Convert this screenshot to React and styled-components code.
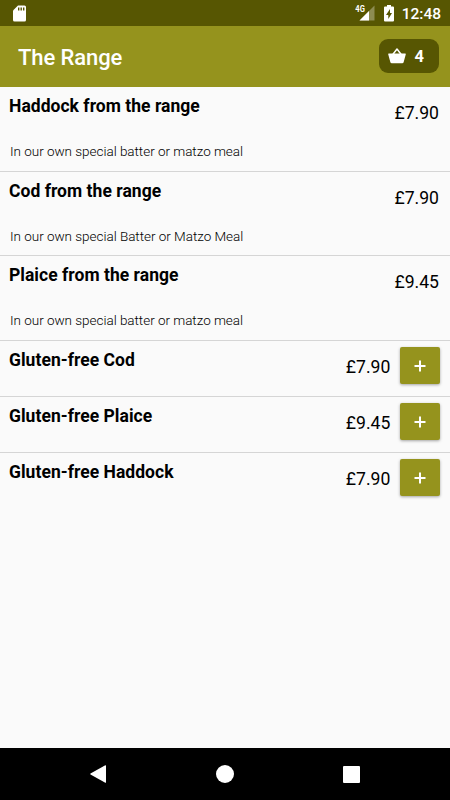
import React from "react";
import styled, { createGlobalStyle } from "styled-components";

const GlobalStyle = createGlobalStyle`
  * { box-sizing: border-box; }
  body { margin: 0; background: #fafafa; font-family: Roboto, "Liberation Sans", sans-serif; color: #000; }
`;

const Screen = styled.div`
  width: 450px;
  height: 800px;
  display: flex;
  flex-direction: column;
  background: #fafafa;
  overflow: hidden;
`;

const StatusBar = styled.header`
  flex: none;
  height: 26px;
  display: flex;
  align-items: center;
  justify-content: space-between;
  padding: 0 9px 0 13px;
  background: #575602;
  color: #fff;
  svg { display: block; }
`;

const StatusIcons = styled.div`
  display: flex;
  align-items: center;
  gap: 8px;
`;

const Clock = styled.time`
  font-size: 15.5px;
  font-weight: 500;
  line-height: 26px;
  padding-top: 2px;
`;

const AppBar = styled.div`
  flex: none;
  height: 61px;
  display: flex;
  align-items: center;
  justify-content: space-between;
  padding: 0 11px 0 18px;
  background: #95931d;
  color: #fff;
`;

const Title = styled.h1`
  margin: 3px 0 0;
  font-size: 22px;
  font-weight: 500;
  line-height: 28px;
  letter-spacing: -0.1px;
`;

const BasketButton = styled.button`
  width: 60px;
  height: 34px;
  margin-top: -1px;
  display: flex;
  align-items: center;
  gap: 9px;
  padding: 0 0 0 8.5px;
  border: 0;
  border-radius: 9px;
  background: #575602;
  color: #fff;
  font: 700 16.5px/34px Roboto, sans-serif;
  svg { display: block; }
  span { padding-top: 2px; }
`;

const Menu = styled.main`
  flex: 1;
`;

const Row = styled.article`
  height: ${(p) => p.$height}px;
  display: flex;
  justify-content: space-between;
  padding: 0 9px;
  border-bottom: 1px solid ${(p) => (p.$last ? "transparent" : "#d5d5d5")};
`;

const Details = styled.div`
  display: flex;
  flex-direction: column;
  padding-top: 8px;
`;

const Name = styled.h2`
  margin: 0;
  font-size: 17.5px;
  font-weight: 700;
  line-height: 22px;
  letter-spacing: 0.03px;
`;

const Description = styled.p`
  margin: 24px 0 0 1px;
  font-size: 13.5px;
  font-weight: 300;
  line-height: 20px;
  letter-spacing: -0.03px;
`;

const Purchase = styled.div`
  display: flex;
  align-items: flex-start;
  gap: 10px;
  padding-top: 6.75px;
  margin-right: ${(p) => (p.$button ? 0.6 : 2)}px;
`;

const Price = styled.span`
  padding-top: 8.25px;
  font-size: 17.6px;
  line-height: 22px;
`;

const AddButton = styled.button`
  width: 40px;
  height: 37px;
  margin-top: -0.5px;
  display: flex;
  align-items: center;
  justify-content: center;
  padding: 0;
  border: 0;
  border-radius: 2px;
  background: #95931d;
  box-shadow: 0 1px 3px rgba(0, 0, 0, 0.35);
`;

const NavBar = styled.nav`
  flex: none;
  height: 52px;
  display: grid;
  grid-template-columns: 162px 126px 162px;
  align-items: center;
  background: #000;
  svg { display: block; }
`;

const NavItem = styled.div`
  display: flex;
  justify-content: ${(p) => p.$side || "center"};
  padding: ${(p) => p.$pad || "0"};
`;

const items = [
  { name: "Haddock from the range", price: "£7.90", text: "In our own special batter or matzo meal", height: 84.5 },
  { name: "Cod from the range", price: "£7.90", text: "In our own special Batter or Matzo Meal", height: 84.5 },
  { name: "Plaice from the range", price: "£9.45", text: "In our own special batter or matzo meal", height: 85 },
  { name: "Gluten-free Cod", price: "£7.90", height: 56 },
  { name: "Gluten-free Plaice", price: "£9.45", height: 56 },
  { name: "Gluten-free Haddock", price: "£7.90", height: 56 },
];

const CardIcon = () => (
  <svg width="13" height="17" viewBox="0 0 13 17">
    <path d="M5 .5h6.5A1.5 1.5 0 0 1 13 2v13a1.5 1.5 0 0 1-1.5 1.5h-10A1.5 1.5 0 0 1 0 15V5.5z" fill="#fff" />
    <path d="M5.7 2.5v3M8.2 2.5v3M10.7 2.5v3" stroke="#575602" strokeWidth="1.4" />
  </svg>
);

const SignalIcon = () => (
  <svg width="21" height="18" viewBox="0 0 21 18">
    <path d="M19.5 1.5V16.5H4.5z" fill="#8d8c52" />
    <path d="M14 7V16.5H4.5z" fill="#fff" />
    <text x="0.3" y="8.3" fill="#fff" fontSize="9" fontWeight="700" textLength="9.5" lengthAdjust="spacingAndGlyphs">4G</text>
  </svg>
);

const BatteryIcon = () => (
  <svg width="10" height="17" viewBox="0 0 10 17">
    <path d="M3 0h4v1.5h2a1 1 0 0 1 1 1V15.5a1 1 0 0 1-1 1H1a1 1 0 0 1-1-1v-13a1 1 0 0 1 1-1h2z" fill="#fff" />
    <path d="M6 4L2 10h2.3v4L8 8H6z" fill="#575602" />
  </svg>
);

const BasketIcon = () => (
  <svg width="18" height="16" viewBox="0 0 18 16">
    <path d="M4.8 6.5L9 1l4.2 5.5" fill="none" stroke="#fff" strokeWidth="1.5" strokeLinejoin="round" />
    <path d="M.8 5.5h16.4q.8 0 .6.8L15.7 14q-.3 1.2-1.5 1.2H3.8q-1.2 0-1.5-1.2L.2 6.3q-.2-.8.6-.8z" fill="#fff" />
  </svg>
);

const PlusIcon = () => (
  <svg width="12" height="12" viewBox="0 0 12 12">
    <path d="M6 .5v11M.5 6h11" stroke="#fff" strokeWidth="2" />
  </svg>
);

export default function App() {
  return (
    <Screen>
      <GlobalStyle />
      <StatusBar>
        <CardIcon />
        <StatusIcons>
          <SignalIcon />
          <BatteryIcon />
          <Clock>12:48</Clock>
        </StatusIcons>
      </StatusBar>
      <AppBar>
        <Title>The Range</Title>
        <BasketButton aria-label="Basket, 4 items">
          <BasketIcon />
          <span>4</span>
        </BasketButton>
      </AppBar>
      <Menu>
        {items.map((item, i) => (
          <Row key={item.name} $height={item.height} $last={i === items.length - 1}>
            <Details>
              <Name>{item.name}</Name>
              {item.text && <Description>{item.text}</Description>}
            </Details>
            <Purchase $button={!item.text}>
              <Price>{item.price}</Price>
              {!item.text && (
                <AddButton aria-label={`Add ${item.name}`}>
                  <PlusIcon />
                </AddButton>
              )}
            </Purchase>
          </Row>
        ))}
      </Menu>
      <NavBar>
        <NavItem $side="flex-start" $pad="0 0 0 90px">
          <svg width="16" height="18" viewBox="0 0 16 18"><path d="M15.3.2Q16 0 16 .7v16.6q0 .7-.7.5L.5 9.5Q0 9 .5 8.5z" fill="#fff" /></svg>
        </NavItem>
        <NavItem>
          <svg width="18" height="18" viewBox="0 0 18 18"><circle cx="9" cy="9" r="9" fill="#fff" /></svg>
        </NavItem>
        <NavItem $side="flex-start" $pad="0 0 0 55px">
          <svg width="17" height="17" viewBox="0 0 17 17"><rect width="17" height="17" rx="1" fill="#fff" /></svg>
        </NavItem>
      </NavBar>
    </Screen>
  );
}
